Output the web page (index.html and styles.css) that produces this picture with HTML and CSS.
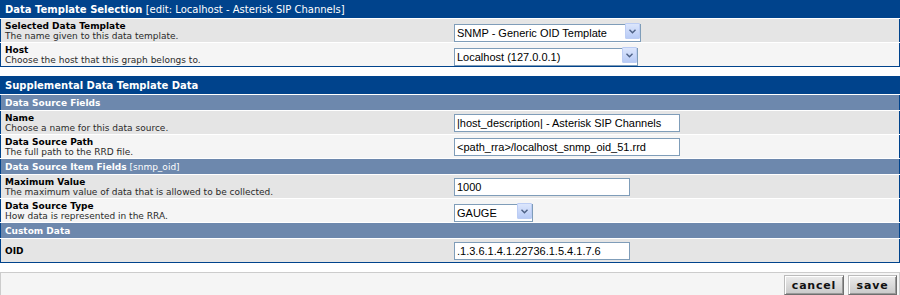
FILE: index.html
```html
<!DOCTYPE html>
<html lang="en">
<head>
    <meta charset="UTF-8">
    <title>Data Sources [edit: Localhost - Asterisk SIP Channels]</title>
    <link rel="stylesheet" href="styles.css">
</head>
<body>
    <table class="box">
        <tr class="head">
            <td colspan="2"><b>Data Template Selection</b> [edit: Localhost - Asterisk SIP Channels]</td>
        </tr>
        <tr class="alt1">
            <td class="label"><b>Selected Data Template</b><br>The name given to this data template.</td>
            <td>
                <span class="drop w-tpl">
                    <select>
                        <option>SNMP - Generic OID Template</option>
                    </select>
                    <span class="arrow"><svg width="7" height="5" viewBox="0 0 7 5"><path d="M0.5 0.8 L3.5 3.8 L6.5 0.8" fill="none" stroke="#4d6185" stroke-width="1.4"/></svg></span>
                </span>
            </td>
        </tr>
        <tr class="alt2">
            <td class="label"><b>Host</b><br>Choose the host that this graph belongs to.</td>
            <td>
                <span class="drop w-host">
                    <select>
                        <option>Localhost (127.0.0.1)</option>
                    </select>
                    <span class="arrow"><svg width="7" height="5" viewBox="0 0 7 5"><path d="M0.5 0.8 L3.5 3.8 L6.5 0.8" fill="none" stroke="#4d6185" stroke-width="1.4"/></svg></span>
                </span>
            </td>
        </tr>
    </table>

    <table class="box">
        <tr class="head">
            <td colspan="2"><b>Supplemental Data Template Data</b></td>
        </tr>
        <tr class="sub">
            <td colspan="2"><b>Data Source Fields</b></td>
        </tr>
        <tr class="alt1">
            <td class="label"><b>Name</b><br>Choose a name for this data source.</td>
            <td><input type="text" class="w-long" value="|host_description| - Asterisk SIP Channels"></td>
        </tr>
        <tr class="alt2">
            <td class="label"><b>Data Source Path</b><br>The full path to the RRD file.</td>
            <td><input type="text" class="w-long" value="&lt;path_rra&gt;/localhost_snmp_oid_51.rrd"></td>
        </tr>
        <tr class="sub">
            <td colspan="2"><b>Data Source Item Fields</b> [snmp_oid]</td>
        </tr>
        <tr class="alt1">
            <td class="label"><b>Maximum Value</b><br>The maximum value of data that is allowed to be collected.</td>
            <td><input type="text" class="w-mid" value="1000"></td>
        </tr>
        <tr class="alt2">
            <td class="label"><b>Data Source Type</b><br>How data is represented in the RRA.</td>
            <td>
                <span class="drop w-type">
                    <select>
                        <option>GAUGE</option>
                    </select>
                    <span class="arrow"><svg width="7" height="5" viewBox="0 0 7 5"><path d="M0.5 0.8 L3.5 3.8 L6.5 0.8" fill="none" stroke="#4d6185" stroke-width="1.4"/></svg></span>
                </span>
            </td>
        </tr>
        <tr class="sub">
            <td colspan="2"><b>Custom Data</b></td>
        </tr>
        <tr class="alt1 single">
            <td class="label"><b>OID</b></td>
            <td><input type="text" class="w-mid" value=".1.3.6.1.4.1.22736.1.5.4.1.7.6"></td>
        </tr>
    </table>

    <div class="save-bar">
        <button class="btn btn-cancel">cancel</button>
        <button class="btn btn-save">save</button>
    </div>
</body>
</html>
```

FILE: styles.css
```css
body {
    margin: 0;
    background: #fff;
    font-family: "DejaVu Sans", Verdana, sans-serif;
}
.box {
    width: 100%;
    border-collapse: collapse;
    border: 1px solid #00438c;
    margin-bottom: 9px;
}
.box td {
    padding: 0 4px;
    vertical-align: middle;
}
.head td {
    background: #00438c;
    color: #fff;
    font-size: 10px;
    height: 16px;
    padding-top: 0;
    padding-bottom: 1px;
}
.sub td {
    background: #6d88ad;
    color: #fff;
    font-size: 9px;
    height: 15px;
    border-top: 1px solid #fff;
}
.alt1 td {
    background: #e5e5e5;
    border-top: 1px solid #fff;
}
.alt2 td {
    background: #f5f5f5;
    border-top: 1px solid #fff;
}
.label {
    width: 50%;
    height: 23px;
    font-size: 9px;
    line-height: 10px;
    color: #2a2a2a;
}
.label b {
    color: #000;
}
input, select {
    font-family: "Liberation Sans", Arial, sans-serif;
    font-size: 11px;
    color: #000;
    box-sizing: border-box;
    height: 18px;
    border: 1px solid #7f9db9;
    background: #fff;
    padding: 0 2px;
    margin: 0;
    vertical-align: middle;
}
.w-long { width: 226px; }
.w-mid { width: 176px; }
.drop {
    position: relative;
    display: inline-block;
    vertical-align: middle;
    height: 18px;
}
.drop select {
    appearance: none;
    -webkit-appearance: none;
    width: 100%;
    outline: none;
}
.w-tpl { width: 187px; }
.w-host { width: 184px; }
.w-type { width: 79px; }
.arrow {
    position: absolute;
    top: 1px;
    right: 1px;
    width: 15px;
    height: 16px;
    box-sizing: border-box;
    border: 1px solid #bccdf4;
    border-radius: 1px;
    background: linear-gradient(#dce6fc, #b8cbf6);
    display: flex;
    align-items: center;
    justify-content: center;
    pointer-events: none;
}
.save-bar {
    margin-top: 2px;
    border: 1px solid #ccc;
    background: #f5f5f5;
    padding: 2px 2px 1px;
    display: flex;
    justify-content: flex-end;
    gap: 4px;
}
.btn {
    font-family: "DejaVu Sans", Verdana, sans-serif;
    font-weight: bold;
    font-size: 11px;
    letter-spacing: 0.8px;
    color: #111;
    height: 20px;
    padding: 0;
    border: 1px solid #6f6f6f;
    border-top-color: #bbb;
    border-left-color: #bbb;
    box-shadow: inset 1px 1px 0 #fff, inset -1px -1px 0 #999;
    background: linear-gradient(#ececec, #c9c9c9);
    cursor: pointer;
}
.btn-cancel { width: 60px; }
.btn-save { width: 49px; }
```
